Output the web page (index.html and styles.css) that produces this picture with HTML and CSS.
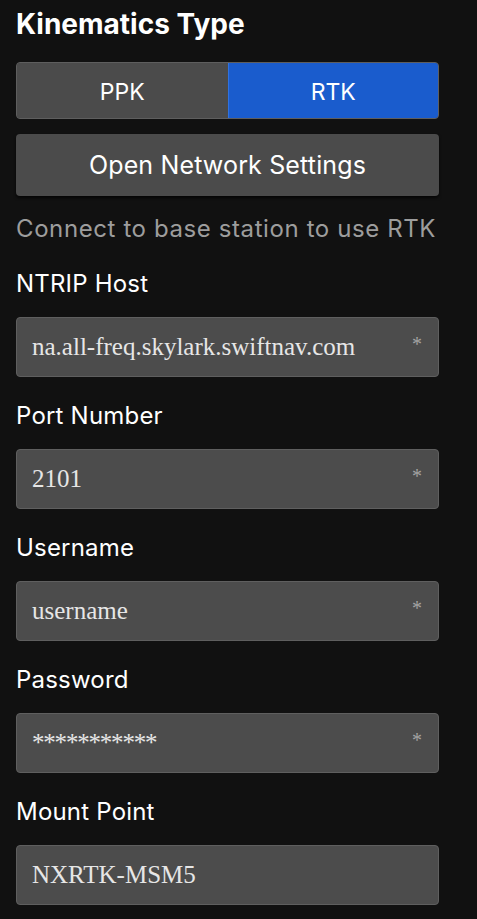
FILE: index.html
```html
<!DOCTYPE html>
<html lang="en">
<head>
<meta charset="utf-8">
<title>Kinematics Type</title>
<link rel="stylesheet" href="styles.css">
</head>
<body>
<main class="panel">
  <h1 class="title">Kinematics Type</h1>
  <div class="segmented">
    <button class="seg">PPK</button>
    <button class="seg seg-active">RTK</button>
  </div>
  <button class="action">Open Network Settings</button>
  <p class="hint">Connect to base station to use RTK</p>

  <div class="field">
    <label class="label">NTRIP Host</label>
    <div class="input"><span class="value">na.all-freq.skylark.swiftnav.com</span><span class="req">*</span></div>
  </div>
  <div class="field">
    <label class="label">Port Number</label>
    <div class="input"><span class="value">2101</span><span class="req">*</span></div>
  </div>
  <div class="field">
    <label class="label">Username</label>
    <div class="input"><span class="value">username</span><span class="req">*</span></div>
  </div>
  <div class="field">
    <label class="label">Password</label>
    <div class="input"><span class="value value-secret">***********</span><span class="req">*</span></div>
  </div>
  <div class="field">
    <label class="label">Mount Point</label>
    <div class="input"><span class="value">NXRTK-MSM5</span></div>
  </div>
</main>
</body>
</html>
```

FILE: styles.css
```css
html, body {
  margin: 0;
  padding: 0;
  background: #111111;
}

body {
  font-family: Inter, "Liberation Sans", sans-serif;
  color: #ffffff;
}

.panel {
  width: 423px;
  padding: 7px 0 0 16px;
  display: flex;
  flex-direction: column;
}

.title {
  margin: 0;
  font-size: 28px;
  line-height: 34px;
  font-weight: 700;
  letter-spacing: 0;
}

.segmented {
  margin-top: 21px;
  height: 57px;
  box-sizing: border-box;
  border: 1px solid #5e5e5e;
  border-radius: 4px;
  display: grid;
  grid-template-columns: 1fr 1fr;
  overflow: hidden;
  background: #4b4b4b;
}

.seg {
  border: 0;
  margin: 0;
  padding: 0;
  background: #4b4b4b;
  color: #ffffff;
  font-family: inherit;
  font-size: 23px;
  padding-top: 2px;
}

.seg-active {
  background: #1a5ccd;
  border-left: 1px solid #2f72e0;
}

.action {
  margin-top: 15px;
  height: 62px;
  border: 0;
  border-radius: 4px;
  background: #4b4b4b;
  color: #ffffff;
  font-family: inherit;
  font-size: 25px;
  letter-spacing: 0.15px;
  box-shadow: 0 2px 3px rgba(0, 0, 0, 0.7);
}

.hint {
  margin: 18px 0 0;
  font-size: 24px;
  letter-spacing: 0.6px;
  line-height: 30px;
  color: #9d9d9d;
}

.field {
  margin-top: 25px;
  display: flex;
  flex-direction: column;
  gap: 18px;
}

.field + .field {
  margin-top: 24px;
}

.label {
  font-size: 24px;
  letter-spacing: 0.2px;
  line-height: 30px;
  color: #ffffff;
}

.input {
  height: 60px;
  box-sizing: border-box;
  border: 1px solid #5f5f5f;
  border-radius: 4px;
  background: #4c4c4c;
  padding: 0 16px 0 15px;
  display: flex;
  align-items: center;
  justify-content: space-between;
  font-family: "Liberation Serif", serif;
  line-height: 30px;
}

.value {
  font-size: 25px;
  color: #e6e6e6;
}

.value-secret {
  letter-spacing: -1.2px;
}

.req {
  font-size: 20px;
  color: #a3a3a3;
  align-self: center;
  margin-top: -6px;
}
```
